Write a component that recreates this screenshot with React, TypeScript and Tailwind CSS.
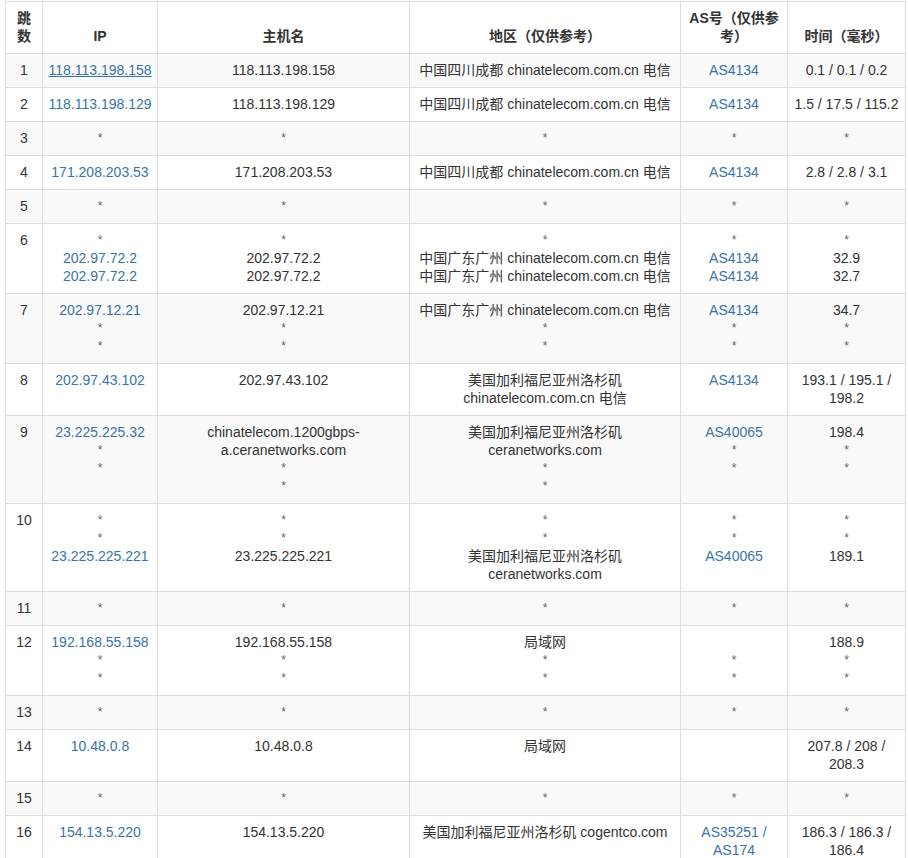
type Cell = string | string[];
type Row = [string, Cell, Cell, Cell, Cell, Cell];

const GD = "中国广东广州 chinatelecom.com.cn 电信";
const SC = "中国四川成都 chinatelecom.com.cn 电信";
const LA = "美国加利福尼亚州洛杉矶 ceranetworks.com";

const rows: Row[] = [
  ["1", "118.113.198.158", "118.113.198.158", SC, "AS4134", "0.1 / 0.1 / 0.2"],
  ["2", "118.113.198.129", "118.113.198.129", SC, "AS4134", "1.5 / 17.5 / 115.2"],
  ["3", "*", "*", "*", "*", "*"],
  ["4", "171.208.203.53", "171.208.203.53", SC, "AS4134", "2.8 / 2.8 / 3.1"],
  ["5", "*", "*", "*", "*", "*"],
  ["6", ["*", "202.97.72.2", "202.97.72.2"], ["*", "202.97.72.2", "202.97.72.2"], ["*", GD, GD], ["*", "AS4134", "AS4134"], ["*", "32.9", "32.7"]],
  ["7", ["202.97.12.21", "*", "*"], ["202.97.12.21", "*", "*"], [GD, "*", "*"], ["AS4134", "*", "*"], ["34.7", "*", "*"]],
  ["8", "202.97.43.102", "202.97.43.102", "美国加利福尼亚州洛杉矶 chinatelecom.com.cn 电信", "AS4134", "193.1 / 195.1 / 198.2"],
  ["9", ["23.225.225.32", "*", "*"], ["chinatelecom.1200gbps-a.ceranetworks.com", "*", "*"], [LA, "*", "*"], ["AS40065", "*", "*"], ["198.4", "*", "*"]],
  ["10", ["*", "*", "23.225.225.221"], ["*", "*", "23.225.225.221"], ["*", "*", LA], ["*", "*", "AS40065"], ["*", "*", "189.1"]],
  ["11", "*", "*", "*", "*", "*"],
  ["12", ["192.168.55.158", "*", "*"], ["192.168.55.158", "*", "*"], ["局域网", "*", "*"], ["\u00a0", "*", "*"], ["188.9", "*", "*"]],
  ["13", "*", "*", "*", "*", "*"],
  ["14", "10.48.0.8", "10.48.0.8", "局域网", "", "207.8 / 208 / 208.3"],
  ["15", "*", "*", "*", "*", "*"],
  ["16", "154.13.5.220", "154.13.5.220", "美国加利福尼亚州洛杉矶 cogentco.com", "AS35251 / AS174", "186.3 / 186.3 / 186.4"],
];

function Lines({ v, link, underline }: { v: Cell; link?: boolean; underline?: boolean }) {
  const arr = Array.isArray(v) ? v : [v];
  return (
    <>
      {arr.map((s, i) => (
        <div
          key={i}
          className={
            s === "*"
              ? "text-[#666] text-[12px]"
              : link && s.trim()
                ? `text-[#3b73a6] ${underline ? "underline" : ""}`
                : ""
          }
        >
          {s}
        </div>
      ))}
    </>
  );
}

export default function App() {
  const td = "border border-[#dddddd] px-[5px] pt-[7px] pb-[8px] align-top text-center break-words";
  return (
    <div
      className="pl-[5px] pt-[1px] text-[14px] leading-[18px] text-[#333]"
      style={{ fontFamily: '"Liberation Sans", "Noto Sans CJK SC", sans-serif' }}
    >
      <table className="table-fixed border-collapse w-[900px]">
        <colgroup>
          <col className="w-[37px]" />
          <col className="w-[115px]" />
          <col className="w-[252px]" />
          <col className="w-[271px]" />
          <col className="w-[107px]" />
          <col className="w-[118px]" />
        </colgroup>
        <thead>
          <tr>
            {["跳数", "IP", "主机名", "地区（仅供参考）", "AS号（仅供参考）", "时间（毫秒）"].map((h) => (
              <th key={h} className="border border-[#dddddd] px-[5px] pt-[7px] pb-[8px] align-bottom font-bold text-center">
                {h}
              </th>
            ))}
          </tr>
        </thead>
        <tbody>
          {rows.map((r, i) => (
            <tr key={r[0]} className={i % 2 === 0 ? "bg-[#f9f9f9]" : "bg-white"}>
              <td className={td}>{r[0]}</td>
              <td className={td}><Lines v={r[1]} link underline={i === 0} /></td>
              <td className={td}><Lines v={r[2]} /></td>
              <td className={td}><Lines v={r[3]} /></td>
              <td className={td}><Lines v={r[4]} link /></td>
              <td className={td}><Lines v={r[5]} /></td>
            </tr>
          ))}
        </tbody>
      </table>
    </div>
  );
}
